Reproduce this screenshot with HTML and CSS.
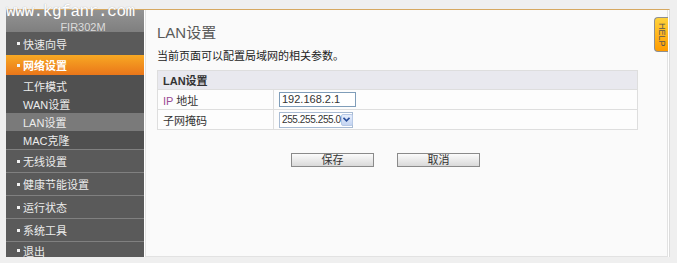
FILE: index.html
```html
<!DOCTYPE html>
<html lang="zh-cn">
  <head>
    <meta charset="utf-8">
    <title>LAN设置</title>
    <link rel="stylesheet" href="styles.css">
  </head>
  <body>
    <div class="frame">
      <div class="watermark">www.kgfanr.com</div>

      <div class="sidebar">
        <div class="model">FIR302M</div>
        <div class="menu-item top"><span class="dot"></span>快速向导</div>
        <div class="menu-item open"><span class="dot"></span>网络设置</div>
        <div class="menu-item sub first">工作模式</div>
        <div class="menu-item sub">WAN设置</div>
        <div class="menu-item sub current">LAN设置</div>
        <div class="menu-item sub">MAC克隆</div>
        <div class="menu-item top line"><span class="dot"></span>无线设置</div>
        <div class="menu-item top line"><span class="dot"></span>健康节能设置</div>
        <div class="menu-item top line"><span class="dot"></span>运行状态</div>
        <div class="menu-item top line"><span class="dot"></span>系统工具</div>
        <div class="menu-item top line last"><span class="dot"></span>退出</div>
      </div>

      <div class="content">
        <h1>LAN设置</h1>
        <p class="intro">当前页面可以配置局域网的相关参数。</p>

        <table class="settings">
          <tr>
            <th colspan="2">LAN设置</th>
          </tr>
          <tr>
            <td class="name"><span class="ip">IP</span> 地址</td>
            <td><div class="field">192.168.2.1</div></td>
          </tr>
          <tr>
            <td class="name">子网掩码</td>
            <td>
              <div class="select">
                <span class="value">255.255.255.0</span>
                <span class="arrow">
                  <svg width="7" height="5" viewBox="0 0 7 5"><path d="M0.5 0.8 L3.5 3.8 L6.5 0.8" fill="none" stroke="#2a4f9c" stroke-width="1.6"/></svg>
                </span>
              </div>
            </td>
          </tr>
        </table>

        <div class="buttons">
          <button class="btn">保存</button>
          <button class="btn">取消</button>
        </div>
      </div>

      <div class="help">HELP</div>
    </div>
  </body>
</html>
```

FILE: styles.css
```css
html {
  font-family: "Liberation Sans", "Noto Sans CJK SC", sans-serif;
}

body {
  margin: 0;
  width: 677px;
  height: 263px;
  background-color: #efefef;
  overflow: hidden;
}

.frame {
  position: relative;
  display: flex;
  margin: 9px 0 0 6px;
  width: 664px;
  height: 248px;
  box-sizing: border-box;
  border-top: 1px solid #d6a860;
  border-right: 1px solid #dcdcdc;
  padding-right: 1px;
  background-color: #ffffff;
}

/* watermark laid over the header */
.watermark {
  position: absolute;
  left: 0;
  top: -4px;
  font-family: "Liberation Mono", monospace;
  font-size: 16px;
  line-height: 12px;
  letter-spacing: -0.4px;
  color: #ffffff;
  text-shadow: 0 0 1px #9a9a9a;
}

.sidebar {
  width: 138px;
  flex: none;
  background-color: #5a5a5a;
  font-size: 11px;
  color: #ececec;
}

.model {
  box-sizing: border-box;
  height: 22px;
  padding: 12px 0 0 16px;
  line-height: 10px;
  text-align: center;
  font-size: 11px;
  color: #dcdcdc;
  background: linear-gradient(#939393, #7f7f7f);
}

.menu-item {
  display: flex;
  align-items: center;
  padding-left: 11px;
}

.dot {
  width: 3px;
  height: 3px;
  margin-right: 3px;
  background-color: #f2f2f2;
}

.top {
  height: 23px;
}

.line {
  box-sizing: border-box;
  border-top: 1px solid #808080;
}

.last {
  height: 16px;
  padding-top: 2px;
}

.open {
  height: 20px;
  font-weight: bold;
  color: #ffffff;
  background: linear-gradient(#f8a923, #ea761a);
}

.sub {
  height: 18px;
  padding-left: 17px;
  background-color: #505050;
}

.sub.first {
  height: 20px;
  padding-top: 2px;
  box-sizing: border-box;
}

.sub.current {
  background-color: #7a7a7a;
}

.content {
  flex: 1;
  margin-left: 1px;
  padding: 14px 0 0 11px;
  border: 1px solid #e2e2e2;
  border-top: none;
  background-color: #fafafa;
}

h1 {
  margin: 0;
  font-size: 15px;
  font-weight: normal;
  line-height: 18px;
  color: #5a5a5a;
}

.intro {
  margin: 7px 0 0;
  font-size: 11px;
  line-height: 14px;
  color: #222222;
}

.settings {
  margin-top: 7px;
  width: 481px;
  border-collapse: collapse;
  font-size: 11px;
  color: #333333;
}

.settings th,
.settings td {
  border: 1px solid #dedede;
  padding: 0 0 0 5px;
}

.settings th {
  height: 18px;
  text-align: left;
  background-color: #e9e9ef;
}

.settings td {
  height: 19px;
  background-color: #fdfdfd;
}

.settings td.name {
  width: 110px;
}

.ip {
  color: #9a4c95;
}

.field {
  width: 73px;
  height: 13px;
  line-height: 13px;
  padding-left: 2px;
  border: 1px solid #7f9db9;
  background-color: #ffffff;
  color: #333333;
}

.select {
  display: flex;
  align-items: center;
  width: 70px;
  height: 14px;
  padding-left: 2px;
  border: 1px solid #a8bbd3;
  background-color: #ffffff;
}

.value {
  flex: 1;
  font-size: 10px;
  letter-spacing: -0.4px;
  white-space: nowrap;
}

.arrow {
  display: flex;
  flex: none;
  align-items: center;
  justify-content: center;
  width: 12px;
  height: 12px;
  margin-right: 1px;
  border: 1px solid #b7c9e6;
  border-radius: 2px;
  background: linear-gradient(#e6eefc, #c4d5f2);
  box-sizing: border-box;
}

.buttons {
  display: flex;
  gap: 23px;
  margin: 23px 0 0 134px;
}

.btn {
  width: 83px;
  height: 14px;
  padding: 0;
  font-family: "Liberation Sans", "Noto Sans CJK SC", sans-serif;
  font-size: 11px;
  line-height: 12px;
  color: #333333;
  border: 1px solid #8a8a8a;
  border-radius: 0;
  background: linear-gradient(#fbfbfb, #d9d9d9);
}

/* help tab on the right edge */
.help {
  position: absolute;
  right: 1px;
  top: 7px;
  width: 13px;
  height: 33px;
  border: 1px solid #8f8f8f;
  border-right: none;
  border-radius: 4px 0 0 4px;
  background: linear-gradient(#ffd23a, #ff9c00);
  writing-mode: vertical-rl;
  font-size: 9px;
  line-height: 13px;
  text-align: center;
  color: #555555;
}
```
